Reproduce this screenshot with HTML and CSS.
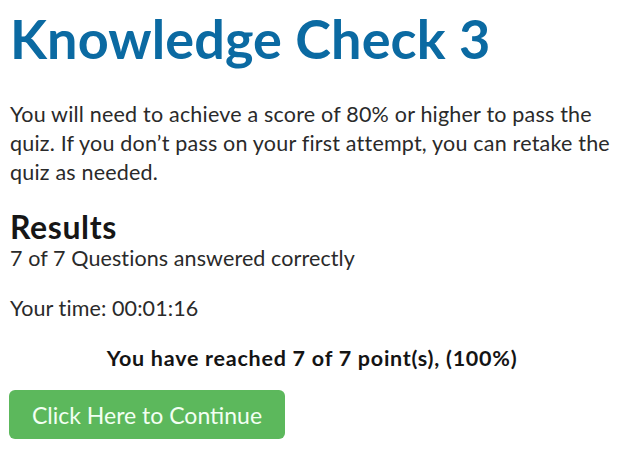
FILE: index.html
```html
<!DOCTYPE html>
<html>
<head>
<meta charset="utf-8">
<link rel="stylesheet" href="styles.css">
</head>
<body>
<div class="page">
  <h1 class="title">Knowledge Check 3</h1>
  <p class="intro">You will need to achieve a score of 80% or higher to pass the quiz. If you don’t pass on your first attempt, you can retake the quiz as needed.</p>
  <h2 class="results-title">Results</h2>
  <p class="line">7 of 7 Questions answered correctly</p>
  <p class="line time">Your time: 00:01:16</p>
  <p class="points">You have reached 7 of 7 point(s), (100%)</p>
  <div class="actions">
    <button class="btn">Click Here to Continue</button>
  </div>
</div>
</body>
</html>
```
FILE: styles.css
```css
* { box-sizing: border-box; }
html, body { margin: 0; padding: 0; background: #fff; }
body { font-family: "Lato", "Open Sans", sans-serif; color: #2a2a2a; }
.page { padding: 12px 10px 0 10px; }
.title { margin: 0; font-size: 54px; font-weight: 700; color: #0b6aa2; line-height: 54px; letter-spacing: 0.1px; }
.intro { margin: 34px 0 0; font-size: 21.5px; line-height: 29px; letter-spacing: 0.2px; max-width: 610px; }
.results-title { margin: 22px 0 0; font-size: 32px; font-weight: 700; line-height: 35px; color: #161616; letter-spacing: 0.6px; }
.line { margin: 0; font-size: 21.5px; line-height: 29px; letter-spacing: 0.1px; }
.time { margin-top: 21px; }
.points { margin: 21px 0 0; text-align: center; font-weight: 700; font-size: 21.5px; line-height: 29px; color: #141414; letter-spacing: 0.75px; }
.actions { margin-top: 17px; }
.btn { font-family: inherit; font-size: 23px; color: #f2fff2; background: #5cb85c; border: none; border-radius: 6px; width: 276px; height: 49px; padding: 0; margin-left: -1px; display: block; }
```
